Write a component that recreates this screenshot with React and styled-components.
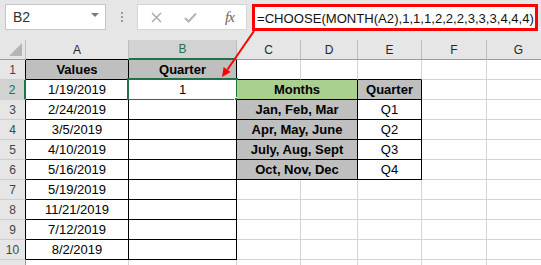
import React from 'react';
import styled, { createGlobalStyle } from 'styled-components';

const GlobalStyle = createGlobalStyle`
  html, body {
    margin: 0;
    padding: 0;
    background: #ffffff;
    overflow: hidden;
  }
`;

const BLACK = '#000000';
const GRID = '#d4d4d4';
const GRAY = '#bfbfbf';
const GREEN = '#a9d08e';
const XL = '#217346';

const Page = styled.div`
  position: relative;
  width: 541px;
  height: 265px;
  overflow: hidden;
  font-family: 'Liberation Sans', Arial, sans-serif;
  background: #ffffff;
`;

const Toolbar = styled.div`
  height: 40px;
  box-sizing: border-box;
  padding: 4px 0 0 5px;
  background: #e6e6e6;
  display: flex;
  align-items: flex-start;
`;

const NameBox = styled.div`
  width: 101px;
  height: 26px;
  box-sizing: border-box;
  border: 1px solid #c6c6c6;
  background: #ffffff;
  display: flex;
  align-items: center;
  justify-content: space-between;
  padding: 0 6px 0 7px;
  font-size: 14px;
  color: #333333;
`;

const Caret = styled.span`
  width: 0;
  height: 0;
  border-left: 4px solid transparent;
  border-right: 4px solid transparent;
  border-top: 4px solid #7a7a7a;
  margin-top: -4px;
`;

const Dots = styled.div`
  width: 31px;
  height: 26px;
  display: flex;
  flex-direction: column;
  align-items: center;
  justify-content: center;
  gap: 2px;
`;

const Dot = styled.span`
  width: 2px;
  height: 2px;
  background: #9a9a9a;
`;

const FuncBox = styled.div`
  width: 110px;
  height: 26px;
  box-sizing: border-box;
  border: 1px solid #d6d6d6;
  background: #ffffff;
  display: flex;
  align-items: center;
  padding-left: 13px;
  gap: 22px;
`;

const Fx = styled.span`
  margin-left: 6px;
  font-family: 'Liberation Serif', 'Times New Roman', serif;
  font-style: italic;
  font-size: 15px;
  color: #666666;
  letter-spacing: -1px;
`;

const FormulaBox = styled.div`
  margin-left: 5px;
  width: 286px;
  height: 27px;
  box-sizing: border-box;
  border: 3px solid #ff0000;
  background: #ffffff;
  display: flex;
  align-items: center;
  padding: 1px 0 0 2px;
  font-size: 13.1px;
  color: #111111;
  white-space: nowrap;
`;

const Sheet = styled.div`
  display: grid;
  grid-template-columns: 26px 103px 108px 64px 57px 64px 65px 64px;
  grid-auto-rows: 20px;
`;

const Corner = styled.div`
  box-sizing: border-box;
  background: #e6e6e6;
  border-right: 1px solid #bdbdbd;
  border-bottom: 1px solid #9b9b9b;
  display: flex;
  align-items: flex-end;
  justify-content: flex-end;
  padding: 0 3px 3px 0;
`;

const CornerMark = styled.span`
  width: 0;
  height: 0;
  border-left: 13px solid transparent;
  border-bottom: 13px solid #b5b5b5;
`;

const ColHead = styled.div`
  box-sizing: border-box;
  background: ${({ $sel }) => ($sel ? '#d2d2d2' : '#e6e6e6')};
  color: ${({ $sel }) => ($sel ? XL : '#262626')};
  border-right: 1px solid #bdbdbd;
  border-bottom: ${({ $sel, $b }) => ($sel ? `2px solid ${XL}` : `1px solid ${$b || '#9b9b9b'}`)};
  font-size: 12px;
  display: flex;
  align-items: center;
  justify-content: center;
`;

const RowHead = styled.div`
  box-sizing: border-box;
  background: ${({ $sel }) => ($sel ? '#d2d2d2' : '#e6e6e6')};
  color: ${({ $sel }) => ($sel ? XL : '#444444')};
  border-right: ${({ $sel, $r }) => ($sel ? `2px solid ${XL}` : `1px solid ${$r || '#9b9b9b'}`)};
  border-bottom: 1px solid #cfcfcf;
  font-size: 12px;
  display: flex;
  align-items: center;
  justify-content: center;
`;

const Cell = styled.div`
  position: relative;
  box-sizing: border-box;
  grid-column: span ${({ $span }) => $span || 1};
  background: ${({ $bg }) => $bg || '#ffffff'};
  border-right: 1px solid ${({ $r }) => $r || GRID};
  border-bottom: 1px solid ${({ $b }) => $b || GRID};
  font-size: 13px;
  font-weight: ${({ $bold }) => ($bold ? 700 : 400)};
  color: #000000;
  display: flex;
  align-items: center;
  justify-content: center;
  white-space: nowrap;
`;

const Selection = styled.span`
  position: absolute;
  top: -2px;
  left: -2px;
  right: -2px;
  bottom: -2px;
  border: 2px solid ${XL};
  pointer-events: none;
`;

const Handle = styled.span`
  position: absolute;
  right: -6px;
  bottom: -6px;
  width: 6px;
  height: 6px;
  background: ${XL};
  border: 1px solid #ffffff;
`;

const Arrow = styled.svg`
  position: absolute;
  left: 0;
  top: 0;
  pointer-events: none;
`;

const cols = ['A', 'B', 'C', 'D', 'E', 'F', 'G'];

const boxed = (t, extra = {}) => ({ t, r: BLACK, b: BLACK, ...extra });

const dates = ['1/19/2019', '2/24/2019', '3/5/2019', '4/10/2019', '5/16/2019', '5/19/2019', '11/21/2019', '7/12/2019', '8/2/2019'];
const months = [
  ['Months', 'Quarter'],
  ['Jan, Feb, Mar', 'Q1'],
  ['Apr, May, June', 'Q2'],
  ['July, Aug, Sept', 'Q3'],
  ['Oct, Nov, Dec', 'Q4'],
];

const buildRows = () => {
  const rows = [];
  rows.push([
    boxed('Values', { bold: true, bg: GRAY }),
    boxed('Quarter', { bold: true, bg: GRAY }),
    { b: BLACK },
    { b: BLACK },
    { b: BLACK },
    {},
    {},
  ]);
  dates.forEach((d, i) => {
    const row = [boxed(d), boxed(i === 0 ? '1' : '', { sel: i === 0 })];
    const m = months[i];
    if (m) {
      row.push(boxed(m[0], { bold: true, span: 2, bg: i === 0 ? GREEN : GRAY }));
      row.push(boxed(m[1], { bold: i === 0, bg: i === 0 ? GRAY : undefined }));
    } else {
      row.push({}, {}, {});
    }
    row.push({}, {});
    rows.push(row);
  });
  // partly visible row 11 at the bottom edge
  rows.push([{}, {}, {}, {}, {}, {}, {}]);
  return rows;
};

const rows = buildRows();

const App = () => (
  <Page>
    <GlobalStyle />
    <Toolbar>
      <NameBox>
        <span>B2</span>
        <Caret />
      </NameBox>
      <Dots>
        <Dot />
        <Dot />
        <Dot />
      </Dots>
      <FuncBox>
        <svg width="11" height="11" viewBox="0 0 11 11">
          <path d="M1 1 L10 10 M10 1 L1 10" stroke="#a6a6a6" strokeWidth="1.4" fill="none" />
        </svg>
        <svg width="13" height="11" viewBox="0 0 13 11">
          <path d="M1 6 L4.5 9.5 L12 1.5" stroke="#b3b3b3" strokeWidth="2" fill="none" />
        </svg>
        <Fx>fx</Fx>
      </FuncBox>
      <FormulaBox>=CHOOSE(MONTH(A2),1,1,1,2,2,2,3,3,3,4,4,4)</FormulaBox>
    </Toolbar>
    <Sheet>
      <Corner>
        <CornerMark />
      </Corner>
      {cols.map((c) => (
        <ColHead key={c} $sel={c === 'B'} $b={c === 'A' ? BLACK : undefined}>
          {c}
        </ColHead>
      ))}
      {rows.map((row, ri) => (
        <React.Fragment key={ri}>
          <RowHead $sel={ri === 1} $r={ri < 10 ? BLACK : undefined}>
            {ri < 10 ? ri + 1 : ''}
          </RowHead>
          {row.map((cell, ci) => (
            <Cell key={ci} $span={cell.span} $bg={cell.bg} $r={cell.r} $b={cell.b} $bold={cell.bold}>
              {cell.t}
              {cell.sel && (
                <Selection>
                  <Handle />
                </Selection>
              )}
            </Cell>
          ))}
        </React.Fragment>
      ))}
    </Sheet>
    <Arrow width="541" height="265" viewBox="0 0 541 265">
      <line x1="254" y1="31" x2="227.5" y2="69.5" stroke="#ff0000" strokeWidth="2" />
      <polygon points="222,77 230.6,72.1 223.6,67.1" fill="#ff0000" />
    </Arrow>
  </Page>
);

export default App;
